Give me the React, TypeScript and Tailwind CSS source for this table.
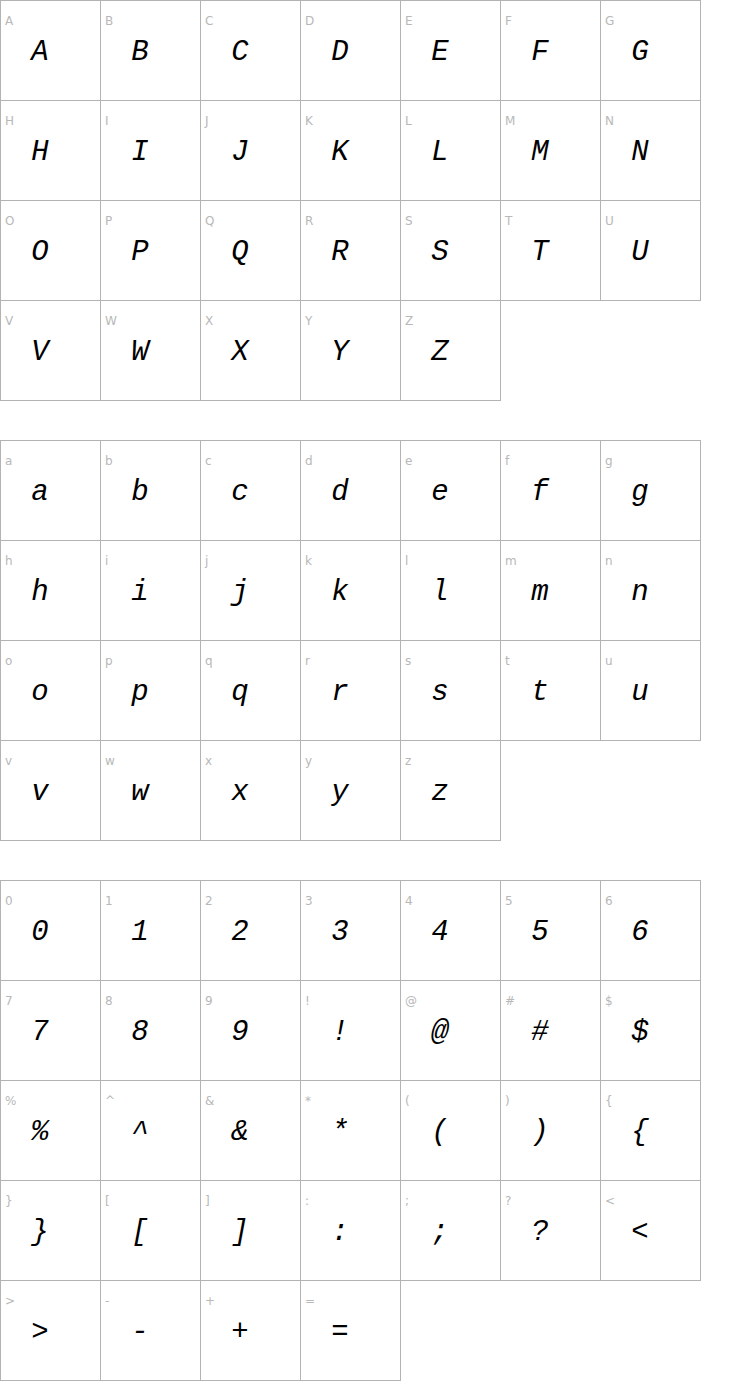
import React from 'react';

const BLOCKS: string[][] = [
  'ABCDEFGHIJKLMNOPQRSTUVWXYZ'.split(''),
  'abcdefghijklmnopqrstuvwxyz'.split(''),
  ['0', '1', '2', '3', '4', '5', '6', '7', '8', '9', '!', '@', '#', '$', '%', '^', '&', '*', '(', ')', '{', '}', '[', ']', ':', ';', '?', '<', '>', '-', '+', '='],
];

const Cell: React.FC<{ ch: string }> = ({ ch }) => (
  <div className="w-[101px] h-[101px] border border-[#b3b3b3] pt-[14px] pl-[4px]">
    <div className="text-[12px] leading-[12px] text-[#b8b8b8] font-['DejaVu_Sans',sans-serif]">{ch}</div>
    <div className="mt-[11px] w-[70px] text-center text-[29px] leading-[29px] italic text-black font-['Courier_New','Liberation_Mono',monospace]">
      {ch}
    </div>
  </div>
);

export default function App() {
  return (
    <div className="bg-white w-[740px] min-h-[1400px] flex flex-col gap-[40px]">
      {BLOCKS.map((chars, i) => (
        <div key={i} className="grid grid-cols-[repeat(7,100px)] auto-rows-[100px]">
          {chars.map(ch => (
            <Cell key={ch} ch={ch} />
          ))}
        </div>
      ))}
    </div>
  );
}
